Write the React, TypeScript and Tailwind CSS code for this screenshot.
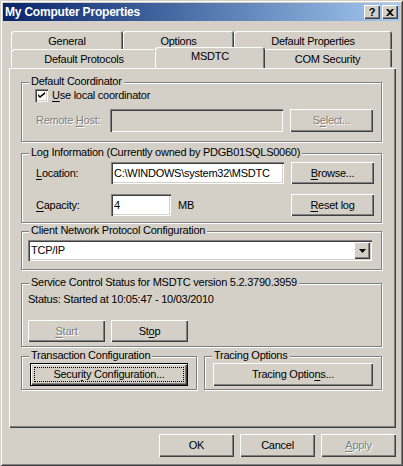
import React from 'react';

const face = "font-['Liberation_Sans',Arial,sans-serif]";
const raised = 'shadow-[inset_1px_1px_0_#fff,inset_-1px_-1px_0_#404040,inset_-2px_-2px_0_#808080]';
const sunken = 'shadow-[inset_1px_1px_0_#808080,inset_2px_2px_0_#404040,inset_-1px_-1px_0_#fff,inset_-2px_-2px_0_#d4d0c8]';
const grayed = 'text-[#808080] [text-shadow:1px_1px_0_#fff]';

function U({ children }: { children: React.ReactNode }) {
  return <span className="underline decoration-1 underline-offset-[2px]">{children}</span>;
}

function Btn({ className = '', disabled, children }: { className?: string; disabled?: boolean; children: React.ReactNode }) {
  return (
    <div className={`flex items-center justify-center bg-[#d4d0c8] ${raised} ${disabled ? grayed : ''} ${className}`}>
      <span>{children}</span>
    </div>
  );
}

function Group({ label, className = '', children }: { label: string; className?: string; children?: React.ReactNode }) {
  return (
    <div className={`relative border border-[#808080] shadow-[1px_1px_0_#fff,inset_1px_1px_0_#fff] ${className}`}>
      <span className="absolute -top-[8px] left-[7px] bg-[#d4d0c8] px-[2px] leading-[13px]">{label}</span>
      {children}
    </div>
  );
}

function Tab({ className = '', children }: { className?: string; children: React.ReactNode }) {
  return (
    <div className={`flex h-[18px] items-center justify-center rounded-t-[3px] bg-[#d4d0c8] pt-[2px] shadow-[inset_1px_1px_0_#fff,inset_-1px_0_0_#404040,inset_-2px_0_0_#808080] ${className}`}>
      {children}
    </div>
  );
}

export default function App() {
  return (
    <div
      className={`h-[466px] w-[403px] bg-[#d4d0c8] p-[3px] text-[11px] leading-[13px] tracking-[-0.25px] text-black ${face} shadow-[inset_1px_1px_0_#d4d0c8,inset_-1px_-1px_0_#404040,inset_2px_2px_0_#fff,inset_-2px_-2px_0_#808080]`}
    >
      {/* title bar */}
      <div className="flex h-[18px] items-center justify-between bg-linear-to-r from-[#0a246a] to-[#a6caf0] pl-[2px] pr-[2px]">
        <span className="text-[12px] font-bold tracking-[-0.2px] text-white">My Computer Properties</span>
        <div className="flex gap-[2px]">
          <div className={`flex h-[14px] w-[16px] items-center justify-center bg-[#d4d0c8] ${raised}`}>
            <span className="text-[11px] leading-[11px] font-bold">?</span>
          </div>
          <div className={`flex h-[14px] w-[16px] items-center justify-center bg-[#d4d0c8] ${raised}`}>
            <svg width="8" height="7" viewBox="0 0 8 7">
              <path d="M0 0h2l2 2 2-2h2L5 3.5 8 7H6L4 5 2 7H0l3-3.5z" fill="#000" />
            </svg>
          </div>
        </div>
      </div>

      <div className="pl-[6px] pt-[10px]">
        {/* tabs */}
        <div className="w-[387px] pl-[2px]">
          <div className="flex">
            <Tab className="w-[112px]">General</Tab>
            <Tab className="w-[111px]">Options</Tab>
            <Tab className="w-[158px]">Default Properties</Tab>
          </div>
          <div className="flex items-start">
            <Tab className="w-[146px]">Default Protocols</Tab>
            <div className="relative z-10 -mx-[2px] -mt-[2px] flex h-[21px] w-[110px] items-start justify-center rounded-t-[3px] bg-[#d4d0c8] pt-[3px] shadow-[inset_1px_1px_0_#fff,inset_-1px_0_0_#404040,inset_-2px_0_0_#808080]">
              MSDTC
            </div>
            <Tab className="w-[129px]">COM Security</Tab>
          </div>
        </div>

        {/* page */}
        <div className={`h-[360px] w-[387px] pl-[12px] pt-[14px] ${raised}`}>
          <Group label="Default Coordinator" className="h-[60px] w-[361px]">
            <div className="flex items-center pl-[13px] pt-[6px]">
              <div className={`flex h-[13px] w-[13px] items-center justify-center bg-white ${sunken}`}>
                <svg width="7" height="7" viewBox="0 0 7 7">
                  <path d="M0 2l2 2 5-4v2L2 6 0 4z" fill="#000" />
                </svg>
              </div>
              <span className="ml-[4px]">
                <U>U</U>se local coordinator
              </span>
            </div>
            <div className="mt-[7px] flex items-center pl-[14px]">
              <span className={`w-[74px] ${grayed}`}>
                Remote <U>H</U>ost:
              </span>
              <div className={`h-[23px] w-[173px] bg-[#d4d0c8] ${sunken}`} />
              <Btn disabled className="ml-[7px] h-[23px] w-[83px]">
                S<U>e</U>lect...
              </Btn>
            </div>
          </Group>

          <Group label="Log Information (Currently owned by PDGB01SQLS0060)" className="mt-[11px] h-[70px] w-[361px]">
            <div className="flex items-center pl-[14px] pt-[8px]">
              <span className="w-[75px]">
                <U>L</U>ocation:
              </span>
              <div className={`flex h-[22px] w-[173px] items-center bg-white pl-[3px] ${sunken}`}>C:\WINDOWS\system32\MSDTC</div>
              <Btn className="ml-[7px] h-[22px] w-[83px]">
                <U>B</U>rowse...
              </Btn>
            </div>
            <div className="mt-[10px] flex items-center pl-[14px]">
              <span className="w-[75px]">
                <U>C</U>apacity:
              </span>
              <div className={`flex h-[22px] w-[60px] items-center bg-white pl-[3px] ${sunken}`}>4</div>
              <span className="ml-[7px] w-[113px]">MB</span>
              <Btn className="h-[22px] w-[83px]">
                <U>R</U>eset log
              </Btn>
            </div>
          </Group>

          <Group label="Client Network Protocol Configuration" className="mt-[8px] h-[39px] w-[361px]">
            <div className="pl-[6px] pt-[8px]">
              <div className={`flex h-[21px] w-[344px] items-center justify-between bg-white pl-[3px] pr-[2px] ${sunken}`}>
                <span>TCP/IP</span>
                <div className={`flex h-[17px] w-[16px] items-center justify-center bg-[#d4d0c8] ${raised}`}>
                  <svg width="7" height="4" viewBox="0 0 7 4">
                    <path d="M0 0h7L3.5 4z" fill="#000" />
                  </svg>
                </div>
              </div>
            </div>
          </Group>

          <Group label="Service Control Status for MSDTC version 5.2.3790.3959" className="mt-[13px] h-[64px] w-[361px]">
            <div className="pl-[6px] pt-[9px]">Status: Started at 10:05:47 - 10/03/2010</div>
            <div className="mt-[14px] flex gap-[6px] pl-[6px]">
              <Btn disabled className="h-[22px] w-[77px]">
                <U>S</U>tart
              </Btn>
              <Btn className="h-[22px] w-[77px]">
                St<U>o</U>p
              </Btn>
            </div>
          </Group>

          <div className="mt-[9px] flex gap-[7px]">
            <Group label="Transaction Configuration" className="h-[34px] w-[176px]">
              <div className="pl-[8px] pt-[6px]">
                <div className="relative h-[23px] w-[158px] border border-black">
                  <Btn className="h-full w-full">
                    Secur<U>i</U>ty Configuration...
                  </Btn>
                  <div className="absolute inset-[3px] border border-dotted border-black" />
                </div>
              </div>
            </Group>
            <Group label="Tracing Options" className="h-[34px] w-[178px]">
              <div className="pl-[8px] pt-[6px]">
                <Btn className="h-[23px] w-[160px]">
                  Tracing Optio<U>n</U>s...
                </Btn>
              </div>
            </Group>
          </div>
        </div>

        {/* dialog buttons */}
        <div className="mt-[6px] flex w-[387px] justify-end gap-[6px]">
          <Btn className="h-[23px] w-[75px]">OK</Btn>
          <Btn className="h-[23px] w-[75px]">Cancel</Btn>
          <Btn disabled className="h-[23px] w-[75px]">
            <U>A</U>pply
          </Btn>
        </div>
      </div>
    </div>
  );
}
